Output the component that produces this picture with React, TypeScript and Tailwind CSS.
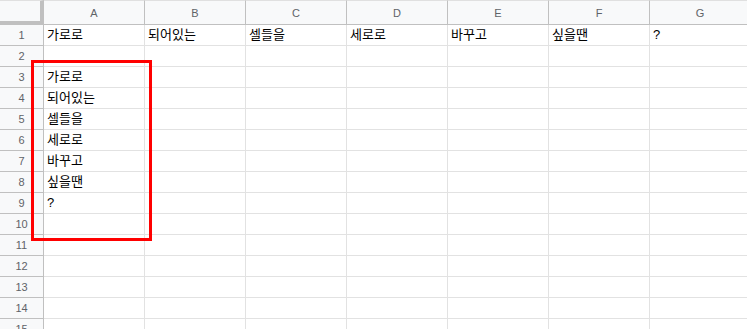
const columns = ["A", "B", "C", "D", "E", "F", "G"]
const rowCount = 15

const cellData: Record<string, string> = {
  "1-A": "가로로",
  "1-B": "되어있는",
  "1-C": "셀들을",
  "1-D": "세로로",
  "1-E": "바꾸고",
  "1-F": "싶을땐",
  "1-G": "?",
  "3-A": "가로로",
  "4-A": "되어있는",
  "5-A": "셀들을",
  "6-A": "세로로",
  "7-A": "바꾸고",
  "8-A": "싶을땐",
  "9-A": "?",
}

export default function App() {
  const rows = Array.from({ length: rowCount }, (_, i) => i + 1)

  return (
    <div
      className="relative h-[329px] w-[747px] overflow-hidden bg-white"
      style={{ fontFamily: '"Liberation Sans", Arial, "Noto Sans CJK KR", sans-serif' }}
    >
      <div className="grid w-max grid-cols-[44px_repeat(7,101px)]">
        {/* header row */}
        <div className="box-border h-[25px] border-t border-r-4 border-b-4 border-t-[#e0e0e0] border-r-[#c0c0c0] border-b-[#c0c0c0] bg-[#f8f9fa]" />
        {columns.map((col) => (
          <div
            key={col}
            className="box-border flex h-[25px] items-center justify-center border-t border-r border-b border-t-[#e0e0e0] border-r-[#c0c0c0] border-b-[#c0c0c0] bg-[#f8f9fa] pt-px text-[11px] text-[#5f6368]"
          >
            {col}
          </div>
        ))}

        {rows.map((row) => (
          <div key={row} className="contents">
            <div className="box-border flex h-[21px] items-center justify-center border-r border-b border-[#c0c0c0] bg-[#f8f9fa] pt-px text-[11px] text-[#5f6368]">
              {row}
            </div>
            {columns.map((col) => (
              <div
                key={col}
                className="box-border flex h-[21px] items-end overflow-visible whitespace-nowrap border-r border-b border-[#e2e2e2] pb-[2px] pl-[3px] text-[13px] leading-[16px] text-black"
              >
                {cellData[`${row}-${col}`] ?? ""}
              </div>
            ))}
          </div>
        ))}
      </div>

      {/* selection outline */}
      <div className="pointer-events-none absolute left-[31px] top-[60px] h-[181px] w-[121px] border-[3px] border-[#ff0000]" />
    </div>
  )
}
